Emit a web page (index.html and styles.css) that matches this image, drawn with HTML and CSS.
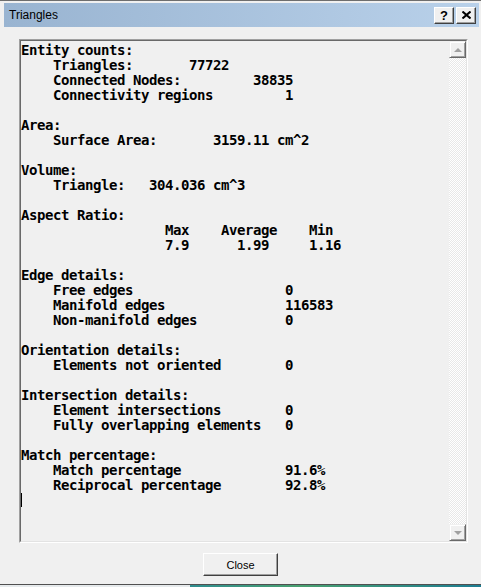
FILE: index.html
```html
<!DOCTYPE html>
<html lang="en">
<head>
  <meta charset="UTF-8">
  <title>Triangles</title>
  <link rel="stylesheet" href="styles.css">
</head>
<body>
  <div class="window">
    <div class="titlebar">
      <span class="title">Triangles</span>
      <div class="caption-btns">
        <span class="cap-btn">?</span>
        <span class="cap-btn">
          <svg width="9" height="8" viewBox="0 0 9 8"><path d="M0.5 0.5 L8.5 7.5 M8.5 0.5 L0.5 7.5" stroke="#000" stroke-width="2"/></svg>
        </span>
      </div>
    </div>

    <div class="client">
      <div class="report">
        <div class="report-inner">
<pre class="report-text">Entity counts:
    Triangles:       77722
    Connected Nodes:         38835
    Connectivity regions         1

Area:
    Surface Area:       3159.11 cm^2

Volume:
    Triangle:   304.036 cm^3

Aspect Ratio:
                  Max    Average    Min
                  7.9      1.99     1.16

Edge details:
    Free edges                   0
    Manifold edges               116583
    Non-manifold edges           0

Orientation details:
    Elements not oriented        0

Intersection details:
    Element intersections        0
    Fully overlapping elements   0

Match percentage:
    Match percentage             91.6%
    Reciprocal percentage        92.8%
<span class="caret"></span></pre>
          <div class="vscroll">
            <div class="sb-btn"><span class="arrow up"></span></div>
            <div class="sb-track"></div>
            <div class="sb-btn"><span class="arrow down"></span></div>
          </div>
        </div>
      </div>

      <div class="buttons">
        <button class="btn">Close</button>
      </div>
    </div>
  </div>
  <div class="desktop"></div>
</body>
</html>
```

FILE: styles.css
```css
body {
  margin: 0;
  background: #dfe4e6;
}
.window {
  width: 481px;
  height: 585px;
  box-sizing: border-box;
  background: #f0f0f0;
  border-top: 1px solid #6e6e6e;
  border-bottom: 1px solid #505050;
  padding: 2px 2px 0 4px;
}
.titlebar {
  height: 24px;
  display: flex;
  align-items: center;
  justify-content: space-between;
  padding: 0 3px 0 5px;
  background: linear-gradient(90deg, #99b4d1, #b9d1ea);
}
.title {
  font-family: "Liberation Sans", Arial, sans-serif;
  font-size: 12px;
  color: #000;
}
.caption-btns {
  display: flex;
  gap: 2px;
}
.cap-btn {
  width: 18px;
  height: 15px;
  display: flex;
  align-items: center;
  justify-content: center;
  background: #f0f0f0;
  border: 1px solid;
  border-color: #fff #404040 #404040 #fff;
  box-shadow: inset -1px -1px #a0a0a0;
  font-family: "Liberation Sans", Arial, sans-serif;
  font-weight: bold;
  font-size: 13px;
  line-height: 15px;
}
.client {
  padding: 12px 0 0 15px;
}
.report {
  width: 449px;
  height: 504px;
  box-sizing: border-box;
  border: 1px solid;
  border-color: #a0a0a0 #fff #fff #a0a0a0;
}
.report-inner {
  height: 100%;
  box-sizing: border-box;
  border: 1px solid;
  border-color: #696969 #e3e3e3 #e3e3e3 #696969;
  display: flex;
}
.report-text {
  flex: 1;
  margin: 0;
  padding: 2px 0 0 0;
  font-family: "DejaVu Sans Mono", monospace;
  font-weight: bold;
  font-size: 14px;
  letter-spacing: -0.43px;
  line-height: 15px;
  color: #000;
}
.caret {
  display: inline-block;
  width: 1px;
  height: 14px;
  background: #000;
  vertical-align: top;
}
.vscroll {
  width: 17px;
  display: flex;
  flex-direction: column;
}
.sb-btn {
  height: 17px;
  box-sizing: border-box;
  background: #f0f0f0;
  border: 1px solid;
  border-color: #f0f0f0 #696969 #696969 #f0f0f0;
  box-shadow: inset 1px 1px #fff, inset -1px -1px #a0a0a0;
  display: flex;
  align-items: center;
  justify-content: center;
}
.sb-track {
  flex: 1;
  background-image: repeating-conic-gradient(#fff 0 25%, #e8e8e8 0 50%);
  background-size: 2px 2px;
}
.arrow {
  width: 0;
  height: 0;
  border-left: 4px solid transparent;
  border-right: 4px solid transparent;
}
.arrow.up {
  border-bottom: 4px solid #a0a0a0;
}
.arrow.down {
  border-top: 4px solid #a0a0a0;
}
.buttons {
  display: flex;
  justify-content: center;
  padding: 10px 17px 0 0;
}
.btn {
  width: 75px;
  height: 23px;
  padding: 0;
  background: #f0f0f0;
  border: 1px solid;
  border-color: #fff #404040 #404040 #fff;
  box-shadow: inset -1px -1px #a0a0a0;
  font-family: "Liberation Sans", Arial, sans-serif;
  font-size: 11px;
  color: #000;
}
.desktop {
  height: 2px;
  background: linear-gradient(90deg, #e6eaec 0 190px, #2f8d8f 190px, #49a070 300px, #1d7d92);
}
```
